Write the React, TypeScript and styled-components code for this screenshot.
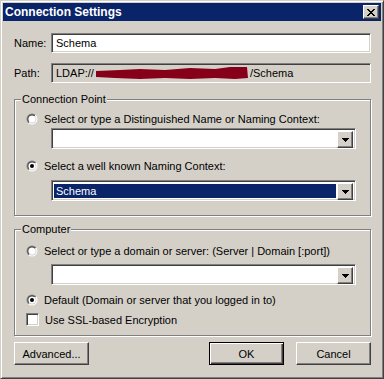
import React from "react";
import styled, { createGlobalStyle, css } from "styled-components";

const GlobalStyle = createGlobalStyle`
  html, body {
    margin: 0;
    padding: 0;
    background: #d4d0c8;
  }
  body {
    font-family: "Liberation Sans", Arial, sans-serif;
    font-size: 11px;
    color: #000;
  }
`;

const sunken = css`
  box-sizing: border-box;
  border: 1px solid;
  border-color: #808080 #ffffff #ffffff #808080;
  box-shadow: inset 1px 1px #404040, inset -1px -1px #d4d0c8;
`;

const raised = css`
  box-sizing: border-box;
  border: 1px solid;
  border-color: #ffffff #404040 #404040 #ffffff;
  box-shadow: inset -1px -1px #808080, inset 1px 1px #d4d0c8;
  background: #d4d0c8;
`;

const Window = styled.div`
  width: 384px;
  height: 379px;
  box-sizing: border-box;
  background: #d4d0c8;
  border: 1px solid;
  border-color: #d4d0c8 #404040 #404040 #d4d0c8;
  box-shadow: inset 1px 1px #ffffff, inset -1px -1px #808080;
  padding: 2px;
  display: flex;
  flex-direction: column;
`;

const TitleBar = styled.div`
  height: 18px;
  background: #0a246a;
  display: flex;
  align-items: center;
  justify-content: space-between;
  padding: 0 2px 0 2px;
`;

const Title = styled.span`
  color: #ffffff;
  font-weight: bold;
  font-size: 12px;
`;

const CloseButton = styled.div`
  ${raised};
  width: 16px;
  height: 14px;
  display: flex;
  align-items: center;
  justify-content: center;
`;

const Body = styled.div`
  display: flex;
  flex-direction: column;
  padding: 12px 10px 0 11px;
`;

const FieldRow = styled.div<{ $top?: number }>`
  display: flex;
  align-items: center;
  height: 20px;
  margin-top: ${p => p.$top ?? 0}px;
`;

const Label = styled.span`
  width: 37px;
`;

const TextBox = styled.div<{ $readOnly?: boolean }>`
  ${sunken};
  flex: 1;
  height: 20px;
  padding-left: 4px;
  display: flex;
  align-items: center;
  white-space: nowrap;
  background: ${p => (p.$readOnly ? "#d4d0c8" : "#ffffff")};
`;

const Group = styled.div<{ $top: number; $pad: string }>`
  position: relative;
  margin-top: ${p => p.$top}px;
  border: 1px solid #808080;
  box-shadow: inset 1px 1px #ffffff, 1px 1px #ffffff;
  padding: ${p => p.$pad};
  display: flex;
  flex-direction: column;
`;

const Legend = styled.span`
  position: absolute;
  top: -7px;
  left: 6px;
  padding: 0 1px;
  line-height: 13px;
  background: #d4d0c8;
`;

const OptionRow = styled.div<{ $top?: number }>`
  display: flex;
  align-items: center;
  gap: 6px;
  height: 13px;
  margin-top: ${p => p.$top ?? 0}px;
  white-space: nowrap;
`;

const Combo = styled.div<{ $top: number }>`
  ${sunken};
  margin-top: ${p => p.$top}px;
  margin-left: 25px;
  width: 305px;
  height: 21px;
  background: #ffffff;
  display: flex;
  padding: 2px;
`;

const ComboValue = styled.div<{ $selected?: boolean }>`
  flex: 1;
  margin: 1px 1px 0 0;
  padding-left: 2px;
  display: flex;
  align-items: center;
  background: ${p => (p.$selected ? "#0a246a" : "transparent")};
  color: ${p => (p.$selected ? "#ffffff" : "#000000")};
`;

const DropButton = styled.div`
  ${raised};
  width: 16px;
  height: 17px;
  display: flex;
  align-items: center;
  justify-content: center;
`;

const CheckBox = styled.div`
  ${sunken};
  width: 13px;
  height: 13px;
  background: #ffffff;
`;

const ButtonRow = styled.div`
  display: flex;
  gap: 12px;
  margin-top: 6px;
`;

const Button = styled.div<{ $default?: boolean; $push?: boolean }>`
  ${raised};
  width: 75px;
  height: 23px;
  display: flex;
  align-items: center;
  justify-content: center;
  margin-left: ${p => (p.$push ? "auto" : "0")};
  ${p =>
    p.$default &&
    css`
      border: 1px solid #000000;
      box-shadow: inset 1px 1px #ffffff, inset -1px -1px #404040,
        inset -2px -2px #808080;
    `}
`;

const CloseGlyph: React.FC = () => {
  const rows = ["XX....XX", ".XX..XX.", "..XXXX..", "...XX...", "..XXXX..", ".XX..XX.", "XX....XX"];
  return (
    <svg width="8" height="7" viewBox="0 0 8 7" shapeRendering="crispEdges">
      {rows.map((r, y) =>
        r.split("").map((c, x) => (c === "X" ? <rect key={`${x}-${y}`} x={x} y={y} width="1" height="1" fill="#000" /> : null))
      )}
    </svg>
  );
};

const Arrow: React.FC = () => (
  <svg width="7" height="4" viewBox="0 0 7 4" shapeRendering="crispEdges">
    <rect x="0" y="0" width="7" height="1" fill="#000" />
    <rect x="1" y="1" width="5" height="1" fill="#000" />
    <rect x="2" y="2" width="3" height="1" fill="#000" />
    <rect x="3" y="3" width="1" height="1" fill="#000" />
  </svg>
);

const Radio: React.FC<{ checked?: boolean }> = ({ checked }) => (
  <svg width="12" height="12" viewBox="0 0 12 12">
    <defs>
      <linearGradient id="rOuter" x1="0" y1="0" x2="1" y2="1">
        <stop offset="0.5" stopColor="#808080" />
        <stop offset="0.5" stopColor="#ffffff" />
      </linearGradient>
      <linearGradient id="rInner" x1="0" y1="0" x2="1" y2="1">
        <stop offset="0.5" stopColor="#404040" />
        <stop offset="0.5" stopColor="#d4d0c8" />
      </linearGradient>
    </defs>
    <circle cx="6" cy="6" r="5.5" fill="url(#rOuter)" />
    <circle cx="6" cy="6" r="4.5" fill="url(#rInner)" />
    <circle cx="6" cy="6" r="3.6" fill="#ffffff" />
    {checked && <circle cx="6" cy="6" r="2" fill="#000" />}
  </svg>
);

// scribbled-out server name in the path field
const Redaction: React.FC = () => (
  <svg width="154" height="15" viewBox="0 0 154 15" style={{ margin: "0 1px" }}>
    <path
      d="M1 5 L25 4 L45 3 L70 4 L95 2 L120 3 L135 1 L152 1 L153 12 L140 13 L120 12 L95 13 L70 12 L45 13 L20 12 L1 11 Z"
      fill="#870019"
    />
  </svg>
);

const App: React.FC = () => {
  return (
    <>
      <GlobalStyle />
      <Window>
        <TitleBar>
          <Title>Connection Settings</Title>
          <CloseButton>
            <CloseGlyph />
          </CloseButton>
        </TitleBar>
        <Body>
          <FieldRow>
            <Label>Name:</Label>
            <TextBox>Schema</TextBox>
          </FieldRow>
          <FieldRow $top={10}>
            <Label>Path:</Label>
            <TextBox $readOnly>
              LDAP://
              <Redaction />
              /Schema
            </TextBox>
          </FieldRow>

          <Group $top={16} $pad="12px 15px 14px 11px">
            <Legend>Connection Point</Legend>
            <OptionRow>
              <Radio />
              Select or type a Distinguished Name or Naming Context:
            </OptionRow>
            <Combo $top={3}>
              <ComboValue />
              <DropButton>
                <Arrow />
              </DropButton>
            </Combo>
            <OptionRow $top={10}>
              <Radio checked />
              Select a well known Naming Context:
            </OptionRow>
            <Combo $top={8}>
              <ComboValue $selected>Schema</ComboValue>
              <DropButton>
                <Arrow />
              </DropButton>
            </Combo>
          </Group>

          <Group $top={13} $pad="14px 15px 9px 11px">
            <Legend>Computer</Legend>
            <OptionRow>
              <Radio />
              Select or type a domain or server: (Server | Domain [:port])
            </OptionRow>
            <Combo $top={7}>
              <ComboValue />
              <DropButton>
                <Arrow />
              </DropButton>
            </Combo>
            <OptionRow $top={8}>
              <Radio checked />
              Default (Domain or server that you logged in to)
            </OptionRow>
            <OptionRow $top={7}>
              <CheckBox />
              Use SSL-based Encryption
            </OptionRow>
          </Group>

          <ButtonRow>
            <Button>Advanced...</Button>
            <Button $default $push>
              OK
            </Button>
            <Button>Cancel</Button>
          </ButtonRow>
        </Body>
      </Window>
    </>
  );
};

export default App;
